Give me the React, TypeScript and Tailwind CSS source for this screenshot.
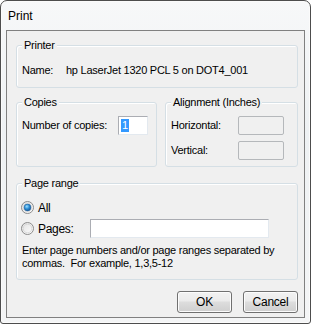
import React from 'react'

const font = { fontFamily: '"Liberation Sans", Arial, sans-serif' }

function Group({ label, className, children }: { label: string; className?: string; children: React.ReactNode }) {
  return (
    <div className={`relative rounded-[3px] border border-[#d5dfe5] shadow-[inset_1px_1px_0_#ffffff] ${className ?? ''}`}>
      <span className="absolute -top-[8px] left-[5px] bg-[#f0f0f0] px-[2px] leading-[14px]">{label}</span>
      {children}
    </div>
  )
}

function Radio({ checked }: { checked?: boolean }) {
  return (
    <svg width="13" height="13" viewBox="0 0 13 13" className="shrink-0">
      <defs>
        <linearGradient id="rbg" x1="0" y1="0" x2="1" y2="1">
          <stop offset="0" stopColor="#e0e0e0" />
          <stop offset="1" stopColor="#ffffff" />
        </linearGradient>
        <radialGradient id="dot" cx="0.4" cy="0.35" r="0.7">
          <stop offset="0" stopColor="#9fe0ff" />
          <stop offset="0.5" stopColor="#2c8fd6" />
          <stop offset="1" stopColor="#14508e" />
        </radialGradient>
      </defs>
      <circle cx="6.5" cy="6.5" r="6" fill="url(#rbg)" stroke="#8b8b8b" />
      <circle cx="6.5" cy="6.5" r="4.3" fill="none" stroke="#d3d3d3" strokeWidth="0.8" />
      {checked ? <circle cx="6.5" cy="6.5" r="3.4" fill="url(#dot)" stroke="#1e5f9e" strokeWidth="0.6" /> : null}
    </svg>
  )
}

function Button({ children }: { children: React.ReactNode }) {
  return (
    <div className="flex h-[22px] w-[55px] items-center justify-center rounded-[3px] border border-[#707070] bg-[linear-gradient(#f2f2f2_0%,#ebebeb_45%,#dddddd_50%,#cfcfcf_100%)] text-[12px] shadow-[inset_0_0_0_1px_#fcfcfc]">
      {children}
    </div>
  )
}

export default function App() {
  return (
    <div className="h-[326px] w-[312px] bg-white text-[11px] tracking-[-0.25px] text-black" style={font}>
      <div className="h-[324px] w-[311px] rounded-t-[7px] rounded-b-[3px] border border-[#4d4d4d] bg-[linear-gradient(180deg,#f7f8f9_0%,#eef1f3_40%,#f4f5f6_100%)] px-[5px] shadow-[inset_0_0_0_1px_#fbfbfb]">
        <div className="flex h-[29px] items-center pl-[2px] text-[12px] tracking-normal">Print</div>
        <div className="h-[288px] w-[299px] border border-[#808080] bg-[#f0f0f0] pl-[9px] pr-[6px] pt-[14px]">
          <Group label="Printer" className="h-[43px]">
            <div className="flex pl-[5px] pt-[18px] leading-[13px]">
              <span className="w-[44px]">Name:</span>
              <span>hp LaserJet 1320 PCL 5 on DOT4_001</span>
            </div>
          </Group>

          <div className="mt-[14px] flex gap-[8px]">
            <Group label="Copies" className="h-[65px] w-[141px]">
              <div className="flex items-center pl-[5px] pt-[13px]">
                <span className="w-[96px]">Number of copies:</span>
                <div className="flex h-[19px] w-[30px] items-center border border-[#abadb3] border-b-[#e3e9ef] border-r-[#e3e9ef] bg-white pl-[2px]">
                  <span className="bg-[#3399ff] px-[1px] leading-[13px] text-white">1</span>
                </div>
              </div>
            </Group>
            <Group label="Alignment (Inches)" className="h-[65px] w-[133px]">
              <div className="flex flex-col gap-[6px] pl-[5px] pt-[13px]">
                <div className="flex items-center">
                  <span className="w-[67px]">Horizontal:</span>
                  <div className="h-[19px] w-[46px] rounded-[2px] border border-[#b5b8bb] bg-[#f0f0f0]" />
                </div>
                <div className="flex items-center">
                  <span className="w-[67px]">Vertical:</span>
                  <div className="h-[19px] w-[46px] rounded-[2px] border border-[#b5b8bb] bg-[#f0f0f0]" />
                </div>
              </div>
            </Group>
          </div>

          <Group label="Page range" className="mt-[16px] h-[97px]">
            <div className="pl-[4px] pt-[17px]">
              <div className="flex h-[13px] items-center gap-[4px]">
                <Radio checked />
                <span className="text-[12px] tracking-[-0.3px]">All</span>
              </div>
              <div className="mt-[5px] flex items-center">
                <div className="flex w-[69px] items-center gap-[4px]">
                  <Radio />
                  <span className="text-[12px] tracking-[-0.3px]">Pages:</span>
                </div>
                <div className="h-[19px] w-[179px] border border-[#abadb3] border-b-[#e3e9ef] border-r-[#e3e9ef] bg-white" />
              </div>
              <p className="mt-[6px] pl-[1px] leading-[13px]">
                Enter page numbers and/or page ranges separated by
                <br />
                commas.&nbsp; For example, 1,3,5-12
              </p>
            </div>
          </Group>

          <div className="mt-[11px] flex justify-end gap-[11px]">
            <Button>OK</Button>
            <Button>Cancel</Button>
          </div>
        </div>
      </div>
    </div>
  )
}
